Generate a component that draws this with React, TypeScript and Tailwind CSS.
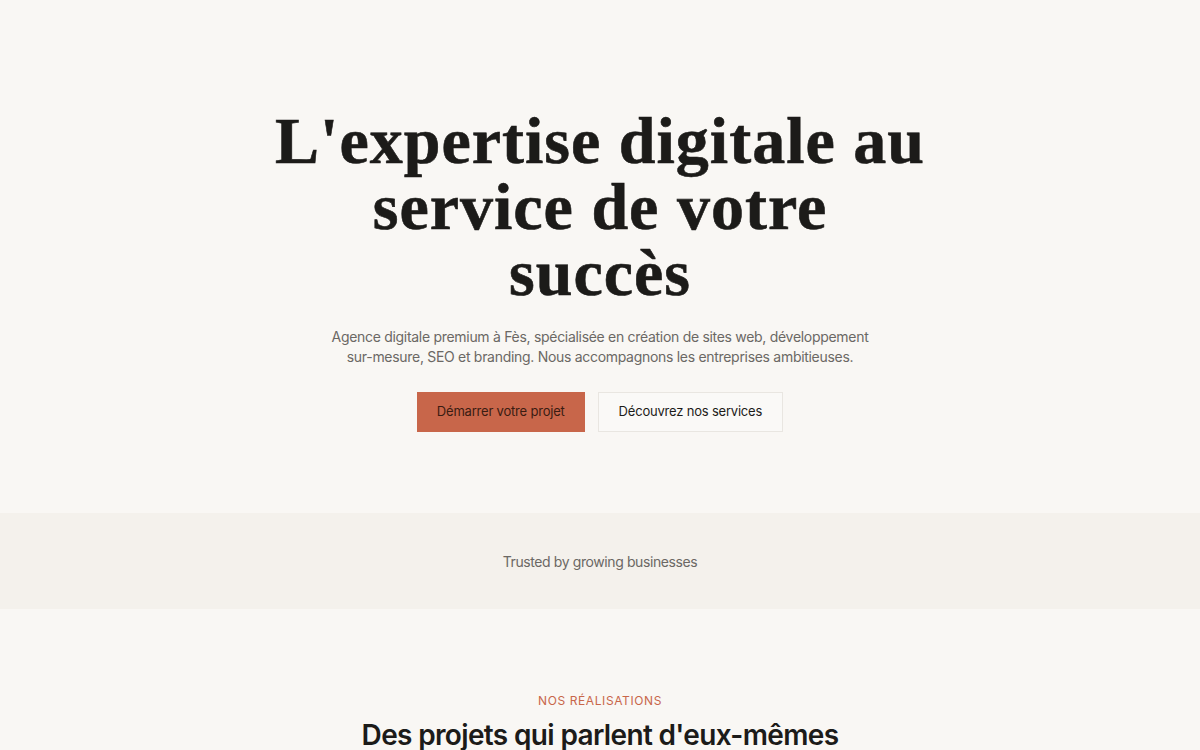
export default function App() {
  return (
    <div className="min-h-screen bg-[#f9f7f4] font-['Inter',sans-serif] tracking-tight text-[#1c1b19]">
      {/* Hero */}
      <section className="flex flex-col items-center px-6 pt-[108px] pb-[81px] text-center">
        <h1 className="font-['Liberation_Serif',serif] text-[66px] font-bold leading-[66px] tracking-[1px] text-[#1c1b19] [-webkit-text-stroke:0.6px_#1c1b19]">
          L'expertise digitale au
          <br />
          service de votre
          <br />
          succès
        </h1>
        <p className="mt-[21px] max-w-[540px] text-[14px] leading-[20px] tracking-[-0.3px] text-[#6b6864]">
          Agence digitale premium à Fès, spécialisée en création de sites web, développement sur-mesure, SEO et branding. Nous accompagnons les entreprises ambitieuses.
        </p>
        <div className="mt-[25px] flex items-center gap-[13px]">
          <button className="h-[40px] bg-[#c8664a] px-[20px] text-[13px] tracking-[-0.2px] text-[#3a1c12]">
            Démarrer votre projet
          </button>
          <button className="h-[40px] border border-[#e9e6e1] bg-[#faf9f7] px-[20px] text-[13px] tracking-[-0.2px] text-[#1c1b19]">
            Découvrez nos services
          </button>
        </div>
      </section>

      {/* Trusted band */}
      <section className="flex h-[96px] items-center justify-center bg-[#f4f1ec]">
        <p className="text-[14px] text-[#6b6864]">Trusted by growing businesses</p>
      </section>

      {/* Projects */}
      <section className="flex flex-col items-center pt-[83px] text-center">
        <span className="text-[12px] uppercase tracking-[0.6px] text-[#c8664a]">Nos réalisations</span>
        <h2 className="mt-[7px] text-[28px] font-semibold leading-[36px] tracking-[-0.65px] text-[#1c1b19]">
          Des projets qui parlent d'eux-mêmes
        </h2>
      </section>
    </div>
  );
}
